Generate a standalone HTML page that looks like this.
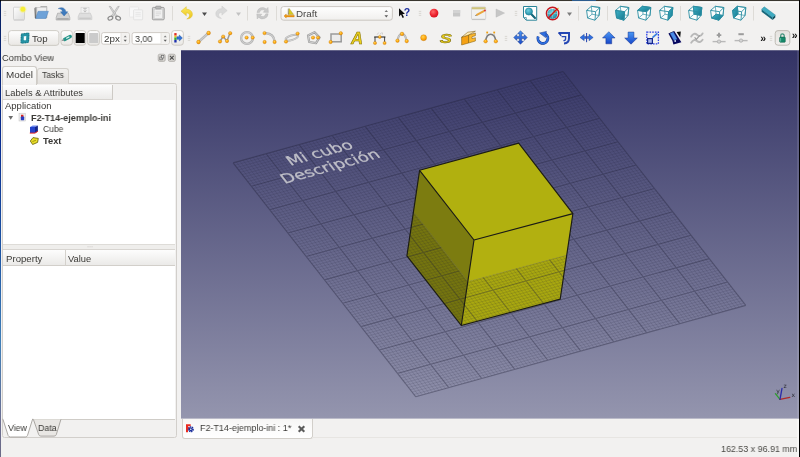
<!DOCTYPE html>
<html lang="es"><head><meta charset="utf-8"><title>FreeCAD</title>
<style>
html,body{margin:0;padding:0}
body{width:800px;height:457px;overflow:hidden;background:#f2f1f0;position:relative;font-family:"Liberation Sans","DejaVu Sans",sans-serif}
.a{position:absolute}
.t{position:absolute;white-space:nowrap;line-height:1;transform-origin:0 0;will-change:transform}
svg{position:absolute;display:block;overflow:visible;will-change:transform}
.v3d{left:181px;top:50px}
.tbs{left:0;top:0}
.topedge{left:0;top:0;width:800px;height:1.2px;background:#39362f}
.hl{left:1px;top:2px;width:798px;height:1.4px;background:#fbfbfa}
.ledge{left:0;top:0;width:1.1px;height:457px;background:linear-gradient(#000 0,#08205f 3px,#0a2d92 30%,#1d55a4 55%,#3f7fb8 75%,#6d6f92 92%,#6b6a86 100%)}
.redge{left:798.7px;top:0;width:1.3px;height:457px;background:#000}
.rhl{left:797px;top:419px;width:2px;height:38px;background:#f8f7f6}
.rhl2{left:797px;top:50.3px;width:1.7px;height:368px;background:rgba(255,255,255,.1)}
.tblue{left:572px;top:0;width:24px;height:1.2px;background:#2c5c8e}
/* dock */
.frame{left:1.5px;top:83px;width:175.4px;height:355px;border:1.4px solid #d2cfcb;border-radius:2.5px;box-sizing:border-box;background:#f2f1f0}
.tab1{left:1.5px;top:65.5px;width:35.5px;height:19.5px;border:1px solid #cfccc7;border-bottom:none;border-radius:3px 3px 0 0;box-sizing:border-box;background:linear-gradient(#fbfbfa,#f2f1f0)}
.tab2{left:37px;top:67.5px;width:31.5px;height:16px;border:1px solid #d3d0cb;border-bottom:none;border-radius:3px 3px 0 0;box-sizing:border-box;background:linear-gradient(#f1f0ee,#e3e1de)}
.hdr{left:2.5px;top:84.5px;width:110px;height:15.5px;background:linear-gradient(#fdfdfd,#ebeae8);border-right:1px solid #cdcac5;border-bottom:1px solid #d6d3cf;box-sizing:border-box}
.hdrr{left:112.5px;top:84.5px;width:62.8px;height:15.5px;background:#f2f1f0}
.tree{left:2.5px;top:100px;width:172.8px;height:144px;background:#fff}
.split{left:2.5px;top:244px;width:172.8px;height:5.5px;background:#efeeec;border-top:1px solid #dedcd8;border-bottom:1px solid #d8d5d1;box-sizing:border-box}
.phdr{left:2.5px;top:249.5px;width:172.8px;height:16.5px;background:linear-gradient(#fdfdfd,#ebeae8);border-bottom:1px solid #d2cfca;box-sizing:border-box}
.pdiv{left:65px;top:250px;width:1px;height:15px;background:#d4d1cc}
.prop{left:2.5px;top:266px;width:172.8px;height:152.5px;background:#fff}
.pline{left:2.5px;top:418.5px;width:172.8px;height:1px;background:#cfccc7}
/* mdi tab */
.mtab{left:181.5px;top:419px;width:131px;height:19.6px;background:linear-gradient(#f7f6f5,#fdfdfd 70%,#fff);border:1px solid #d2cfca;border-top:none;border-radius:0 0 3px 3px;box-sizing:border-box}
.sline{left:312px;top:437.3px;width:487px;height:1px;background:#e7e5e2}
</style></head>
<body>
<svg class="v3d" width="618" height="368.6" viewBox="0 0 618 368.6">
<defs><linearGradient id="bg3" x1="0" y1="0" x2="0" y2="1"><stop offset="0" stop-color="#333365"/><stop offset="1" stop-color="#9495ae"/></linearGradient></defs>
<rect y=".25" width="618" height="368.35" fill="url(#bg3)"/>
<polygon points="232.44,161.77 286.84,231.47 280.3,275.5 225.9,205.8" fill="#75750f"/>
<polygon points="286.84,231.47 385.74,205.07 379.2,249.1 280.3,275.5" fill="#a9a810"/>
<path d="M55.4 111.99L238.1 345.89M53.93 115.24L383.93 23.84M58.7 111.07L241.4 344.97M55.75 117.58L385.75 26.18M62 110.16L244.7 344.06M57.58 119.92L387.58 28.52M65.3 109.24L248 343.14M59.41 122.26L389.41 30.86M68.6 108.33L251.3 342.23M61.23 124.59L391.24 33.19M71.9 107.42L254.6 341.32M63.06 126.93L393.06 35.53M75.2 106.5L257.9 340.4M64.89 129.27L394.89 37.87M78.5 105.59L261.2 339.49M66.72 131.61L396.72 40.21M81.8 104.67L264.5 338.57M68.54 133.95L398.54 42.55M88.4 102.85L271.1 336.75M72.2 138.63L402.2 47.23M91.7 101.93L274.4 335.83M74.02 140.97L404.02 49.57M95 101.02L277.7 334.92M75.85 143.31L405.85 51.91M98.3 100.1L281 334M77.68 145.65L407.68 54.25M101.6 99.19L284.3 333.09M79.5 147.99L409.5 56.59M104.9 98.28L287.6 332.18M81.33 150.32L411.33 58.92M108.2 97.36L290.9 331.26M83.16 152.66L413.16 61.26M111.5 96.45L294.2 330.35M84.99 155L414.99 63.6M114.8 95.53L297.5 329.43M86.81 157.34L416.81 65.94M121.4 93.71L304.1 327.61M90.47 162.02L420.47 70.62M124.7 92.79L307.4 326.69M92.29 164.36L422.29 72.96M128 91.88L310.7 325.78M94.12 166.7L424.12 75.3M131.3 90.96L314 324.86M95.95 169.04L425.95 77.64M134.6 90.05L317.3 323.95M97.77 171.38L427.77 79.97M137.9 89.14L320.6 323.04M99.6 173.71L429.6 82.31M141.2 88.22L323.9 322.12M101.43 176.05L431.43 84.65M144.5 87.31L327.2 321.21M103.26 178.39L433.26 86.99M147.8 86.39L330.5 320.29M105.08 180.73L435.08 89.33M154.4 84.57L337.1 318.47M108.74 185.41L438.74 94.01M157.7 83.65L340.4 317.55M110.56 187.75L440.56 96.35M161 82.74L343.7 316.64M112.39 190.09L442.39 98.69M164.3 81.82L347 315.72M114.22 192.43L444.22 101.03M167.6 80.91L350.3 314.81M116.05 194.76L446.05 103.37M170.9 80L353.6 313.9M117.87 197.1L447.87 105.7M174.2 79.08L356.9 312.98M119.7 199.44L449.7 108.04M177.5 78.17L360.2 312.07M121.53 201.78L451.53 110.38M180.8 77.25L363.5 311.15M123.35 204.12L453.35 112.72M187.4 75.43L370.1 309.33M127.01 208.8L457.01 117.4M190.7 74.51L373.4 308.41M128.83 211.14L458.83 119.74M194 73.6L376.7 307.5M130.66 213.48L460.66 122.08M197.3 72.68L380 306.58M132.49 215.82L462.49 124.42M200.6 71.77L383.3 305.67M134.31 218.15L464.32 126.75M203.9 70.86L386.6 304.76M136.14 220.49L466.14 129.09M207.2 69.94L389.9 303.84M137.97 222.83L467.97 131.43M210.5 69.03L393.2 302.93M139.8 225.17L469.8 133.77M213.8 68.11L396.5 302.01M141.62 227.51L471.62 136.11M220.4 66.29L403.1 300.19M145.28 232.19L475.28 140.79M223.7 65.37L406.4 299.27M147.1 234.53L477.1 143.13M227 64.46L409.7 298.36M148.93 236.87L478.93 145.47M230.3 63.54L413 297.44M150.76 239.21L480.76 147.81M233.6 62.63L416.3 296.53M152.58 241.55L482.59 150.15M236.9 61.72L419.6 295.62M154.41 243.88L484.41 152.48M240.2 60.8L422.9 294.7M156.24 246.22L486.24 154.82M243.5 59.89L426.2 293.79M158.07 248.56L488.07 157.16M246.8 58.97L429.5 292.87M159.89 250.9L489.89 159.5M253.4 57.15L436.1 291.05M163.55 255.58L493.55 164.18M256.7 56.23L439.4 290.13M165.37 257.92L495.37 166.52M260 55.32L442.7 289.22M167.2 260.26L497.2 168.86M263.3 54.4L446 288.3M169.03 262.6L499.03 171.2M266.6 53.49L449.3 287.39M170.86 264.94L500.86 173.53M269.9 52.58L452.6 286.48M172.68 267.27L502.68 175.87M273.2 51.66L455.9 285.56M174.51 269.61L504.51 178.21M276.5 50.75L459.2 284.65M176.34 271.95L506.34 180.55M279.8 49.83L462.5 283.73M178.16 274.29L508.16 182.89M286.4 48.01L469.1 281.91M181.82 278.97L511.82 187.57M289.7 47.09L472.4 280.99M183.64 281.31L513.64 189.91M293 46.18L475.7 280.08M185.47 283.65L515.47 192.25M296.3 45.26L479 279.16M187.3 285.99L517.3 194.59M299.6 44.35L482.3 278.25M189.12 288.33L519.12 196.93M302.9 43.44L485.6 277.34M190.95 290.66L520.95 199.26M306.2 42.52L488.9 276.42M192.78 293L522.78 201.6M309.5 41.61L492.2 275.51M194.61 295.34L524.61 203.94M312.8 40.69L495.5 274.59M196.43 297.68L526.43 206.28M319.4 38.87L502.1 272.77M200.09 302.36L530.09 210.96M322.7 37.95L505.4 271.85M201.91 304.7L531.91 213.3M326 37.04L508.7 270.94M203.74 307.04L533.74 215.64M329.3 36.12L512 270.02M205.57 309.38L535.57 217.98M332.6 35.21L515.3 269.11M207.39 311.72L537.39 220.31M335.9 34.3L518.6 268.2M209.22 314.05L539.22 222.65M339.2 33.38L521.9 267.28M211.05 316.39L541.05 224.99M342.5 32.47L525.2 266.37M212.88 318.73L542.88 227.33M345.8 31.55L528.5 265.45M214.7 321.07L544.7 229.67M352.4 29.73L535.1 263.63M218.36 325.75L548.36 234.35M355.7 28.81L538.4 262.71M220.18 328.09L550.18 236.69M359 27.9L541.7 261.8M222.01 330.43L552.01 239.03M362.3 26.98L545 260.88M223.84 332.77L553.84 241.37M365.6 26.07L548.3 259.97M225.66 335.11L555.66 243.7M368.9 25.16L551.6 259.06M227.49 337.44L557.49 246.04M372.2 24.24L554.9 258.14M229.32 339.78L559.32 248.38M375.5 23.33L558.2 257.23M231.15 342.12L561.15 250.72M378.8 22.41L561.5 256.31M232.97 344.46L562.97 253.06" stroke="#1e1e36" stroke-opacity=".2" stroke-width=".65" fill="none"/>
<path d="M52.1 112.9L234.8 346.8M52.1 112.9L382.1 21.5M85.1 103.76L267.8 337.66M70.37 136.29L400.37 44.89M118.1 94.62L300.8 328.52M88.64 159.68L418.64 68.28M151.1 85.48L333.8 319.38M106.91 183.07L436.91 91.67M184.1 76.34L366.8 310.24M125.18 206.46L455.18 115.06M217.1 67.2L399.8 301.1M143.45 229.85L473.45 138.45M250.1 58.06L432.8 291.96M161.72 253.24L491.72 161.84M283.1 48.92L465.8 282.82M179.99 276.63L509.99 185.23M316.1 39.78L498.8 273.68M198.26 300.02L528.26 208.62M349.1 30.64L531.8 264.54M216.53 323.41L546.53 232.01M382.1 21.5L564.8 255.4M234.8 346.8L564.8 255.4" stroke="#1e1e36" stroke-opacity=".36" stroke-width="1.1" fill="none"/>
<polygon points="238.6,120.3 293,190 286.84,231.47 232.44,161.77" fill="#7c7c10"/>
<polygon points="293,190 391.9,163.6 385.74,205.07 286.84,231.47" fill="#b2b010"/>
<polygon points="238.6,120.3 337.7,93.1 391.9,163.6 293,190" fill="#b1b00f"/>
<path d="M238.6 120.3L337.7 93.1L391.9 163.6L293 190ZM238.6 120.3L225.9 205.8L280.3 275.5L379.2 249.1L391.9 163.6M293 190L280.3 275.5" stroke="#1c1c14" stroke-width="1.15" fill="none" stroke-linejoin="round"/>
<text transform="matrix(3.30 -0.914 1.827 2.339 141.5 106.8)" font-family="'DejaVu Sans','Liberation Sans',sans-serif" font-size="5" text-anchor="middle" fill="#bfbfc8" stroke="#bfbfc8" stroke-width=".1">Mi cubo</text>
<text transform="matrix(3.30 -0.914 1.827 2.339 152.1 120.37)" font-family="'DejaVu Sans','Liberation Sans',sans-serif" font-size="5" text-anchor="middle" fill="#bfbfc8" stroke="#bfbfc8" stroke-width=".1">Descripción</text>
<g stroke-linecap="round" stroke-width="1.3" fill="none"><path d="M599 349.4l-4.6 -5.7" stroke="#2fa02f"/><path d="M599 349.4l9.8 -2" stroke="#b02a2a"/><path d="M599 349.4l2 -11" stroke="#2a2aa8"/></g>
<g font-family="'DejaVu Sans','Liberation Sans',sans-serif" font-size="6" fill="#2a2a33"><text x="610.5" y="347.3">x</text><text x="595.3" y="343.2">y</text><text x="602.4" y="338.2">z</text></g>
</svg>
<div class="a frame"></div><div class="a tab2"></div><div class="a tab1"></div>
<div class="a hdrr"></div><div class="a hdr"></div><div class="a tree"></div><div class="a split"></div>
<div class="a phdr"></div><div class="a pdiv"></div><div class="a prop"></div><div class="a pline"></div>
<div class="a mtab"></div><div class="a sline"></div>
<svg class="tbs" width="800" height="50" viewBox="0 0 800 50">
<defs>
<radialGradient id="og" cx=".4" cy=".35" r=".7"><stop offset="0" stop-color="#ffd257"/><stop offset=".55" stop-color="#ffab10"/><stop offset="1" stop-color="#e78600"/></radialGradient>
<linearGradient id="bt" x1="0" y1="0" x2="0" y2="1"><stop offset="0" stop-color="#fefefe"/><stop offset="1" stop-color="#e9e7e4"/></linearGradient>
<linearGradient id="bt2" x1="0" y1="0" x2="0" y2="1"><stop offset="0" stop-color="#e4e2de"/><stop offset="1" stop-color="#f1f0ee"/></linearGradient>
<linearGradient id="pg" x1="0" y1="0" x2="1" y2="1"><stop offset="0" stop-color="#fdfdfd"/><stop offset="1" stop-color="#dcdcdc"/></linearGradient>
<linearGradient id="tl" x1="0" y1="0" x2="1" y2="1"><stop offset="0" stop-color="#3fb2c8"/><stop offset="1" stop-color="#14788e"/></linearGradient>
<linearGradient id="yg" x1="0" y1="0" x2="0" y2="1"><stop offset="0" stop-color="#fdea5a"/><stop offset="1" stop-color="#e9c220"/></linearGradient>
<linearGradient id="bl" x1="0" y1="0" x2="0" y2="1"><stop offset="0" stop-color="#4a98f5"/><stop offset="1" stop-color="#1746c8"/></linearGradient>
<linearGradient id="cb" x1="0" y1="0" x2="0" y2="1"><stop offset="0" stop-color="#ffffff"/><stop offset="1" stop-color="#f0efed"/></linearGradient>
<radialGradient id="rd" cx=".4" cy=".35" r=".7"><stop offset="0" stop-color="#ff6a6a"/><stop offset=".6" stop-color="#ec2430"/><stop offset="1" stop-color="#d4121f"/></radialGradient>
<radialGradient id="mg" cx=".4" cy=".35" r=".7"><stop offset="0" stop-color="#6fd0e0"/><stop offset="1" stop-color="#1a87a0"/></radialGradient>
</defs>
<path d="M3.8 11.4h2.4M3.8 13.4h2.4M3.8 15.4h2.4" stroke="#d3d0cb" stroke-width=".8"/>
<rect x="13.5" y="7.2" width="11" height="12.6" rx=".9" fill="url(#pg)" stroke="#c6c6c6" stroke-width=".7"/><path d="M13.8 20.2h10.4" stroke="#c9c9c9" stroke-width=".7"/>
<circle cx="22.9" cy="9.3" r="3.6" fill="#faf57a" opacity=".45"/><circle cx="22.9" cy="9.3" r="2.5" fill="#f6ee35"/>
<path d="M35 7.6h4.8l1-1.1h6v11.5h-11.8z" fill="#b4b4b4" stroke="#8f8f8f" stroke-width=".5"/><rect x="37" y="7.4" width="9.4" height="7" fill="#efefef" stroke="#c4c4c4" stroke-width=".4"/>
<polygon points="35.6,18.4 45.9,18.4 48.4,11.3 38.1,11.3" fill="#6ea2d8" stroke="#4d82bd" stroke-width=".5"/><path d="M34.9 8.2l.7 10.2" stroke="#555" stroke-width=".7"/>
<path d="M57.6 13.2L56.2 17.6v2.4h13.6v-2.4L68.4 13.2z" fill="#d3d3d3" stroke="#9b9b9b" stroke-width=".6"/><path d="M57.2 18.9h11.6" stroke="#8c8c8c" stroke-width=".9"/>
<path d="M58.2 8.6c3.6-2.2 7.4-.4 7.6 3.2h2l-3.7 4.2-3.7-4.2h2.1c-.1-1.9-1.9-3.3-4.3-3.2z" fill="#3e7bbe" stroke="#2c5f9e" stroke-width=".4"/>
<rect x="81" y="7.2" width="8" height="6.4" fill="#f1f1f1" stroke="#cdcdcd" stroke-width=".5"/><path d="M85 8.3v3.6m-1.5-1.4l1.5 1.6 1.5-1.6M83.2 8.4h3.6" stroke="#b9b9b9" stroke-width=".8" fill="none"/>
<path d="M79.6 13.2L78.2 16.8v2.8h13.6v-2.8L90.4 13.2z" fill="#dedede" stroke="#c2c2c2" stroke-width=".6"/><path d="M79.2 18.2h11.6" stroke="#bdbdbd" stroke-width=".9"/>
<g stroke="#9a9a9a" stroke-width=".5" fill="#dadada"><polygon points="109.2,6.3 110.9,6.6 117.4,16.4 115.9,17.2"/><polygon points="119.3,6.3 117.6,6.6 111.1,16.4 112.6,17.2"/></g>
<g stroke="#8a8a8a" stroke-width="1.15" fill="none"><ellipse cx="110.4" cy="18.1" rx="2.5" ry="1.8" transform="rotate(-25 110.4 18.1)"/><ellipse cx="118.1" cy="18.1" rx="2.5" ry="1.8" transform="rotate(25 118.1 18.1)"/></g>
<rect x="129.5" y="7" width="9" height="10" rx=".6" fill="#f8f8f8" stroke="#e1e1e1" stroke-width=".6"/><rect x="133.6" y="9.8" width="9" height="10" rx=".6" fill="#f5f5f5" stroke="#d9d9d9" stroke-width=".6"/><path d="M135.4 12.6h5.4M135.4 14.4h5.4M135.4 16.2h5.4" stroke="#e3e3e3" stroke-width=".7"/>
<rect x="152.4" y="7.4" width="11.8" height="12.4" rx="1" fill="#d6d6d6" stroke="#8e8e8e" stroke-width=".8"/><rect x="154.1" y="9.4" width="8.4" height="9" fill="#f0f0f0" stroke="#bdbdbd" stroke-width=".4"/>
<rect x="155.6" y="6.1" width="5.4" height="2.8" rx=".8" fill="#b9b9b9" stroke="#878787" stroke-width=".5"/><path d="M155.6 12h5.4M155.6 13.8h5.4M155.6 15.6h3.6" stroke="#d0d0d0" stroke-width=".7"/>
<path d="M172.5 6V20.5" stroke="#dddbd7" stroke-width="1"/>
<path d="M181 11.2L186.3 6.7V9.3C190.6 9.3 192.4 12 192.4 14.3C192.4 17 190.1 19 186.8 19C189 17.9 189.7 16.4 189.5 15C189.3 13.6 188.1 13.1 186.3 13.1V15.7Z" fill="url(#yg)" stroke="#dcb920" stroke-width=".45" stroke-linejoin="round"/>
<polygon points="202,12.6 207,12.6 204.5,16.0" fill="#4b4b4b"/>
<path d="M181 11.2L186.3 6.7V9.3C190.6 9.3 192.4 12 192.4 14.3C192.4 17 190.1 19 186.8 19C189 17.9 189.7 16.4 189.5 15C189.3 13.6 188.1 13.1 186.3 13.1V15.7Z" transform="translate(408.2 -.6) scale(-1 1)" fill="#d9d9d9" stroke="#cacaca" stroke-width=".45" stroke-linejoin="round"/>
<polygon points="236,12.6 241,12.6 238.5,16.0" fill="#c2c2c2"/>
<path d="M247.5 6V20.5" stroke="#dddbd7" stroke-width="1"/>
<g fill="#c9c9c9" stroke="#b4b4b4" stroke-width=".4"><path d="M257 12.6A5.6 5.6 0 0 1 266.4 9L268 7.4L268.4 12.5L263.3 12.2L264.8 10.6A3.3 3.3 0 0 0 259.4 12.6Z"/><path d="M257 12.6A5.6 5.6 0 0 1 266.4 9L268 7.4L268.4 12.5L263.3 12.2L264.8 10.6A3.3 3.3 0 0 0 259.4 12.6Z" transform="rotate(180 262.6 13.2)"/></g>
<path d="M276.5 6V20.5" stroke="#dddbd7" stroke-width="1"/>
<rect x="281" y="6.6" width="111.4" height="13.6" rx="2.6" fill="url(#cb)" stroke="#c6c2bc" stroke-width=".9"/>
<polygon points="384.6,11.9 388,11.9 386.3,9.9" fill="#777"/><polygon points="384.5,15.2 388.1,15.2 386.3,17.4" fill="#5a5a5a"/>
<polygon points="289.2,8.4 293.6,14.4 288.6,14.4" fill="#d9cb22" stroke="#8a7d10" stroke-width=".3"/><path d="M288.3 8.6v6" stroke="#6a5a20" stroke-width=".6"/>
<path d="M284 16l2.2-2v1.2h8v1.7h-8v1.2z" fill="#f39c14" stroke="#b96a00" stroke-width=".35"/>
<polygon points="399,8.2 399,16.4 401,14.5 402.6,17.9 404,17.2 402.4,13.9 405,13.9" fill="#0c0c0c"/>
<text x="403.8" y="16.2" font-family="'Liberation Sans',sans-serif" font-weight="bold" font-size="10.5" fill="#1b2d9e">?</text>
<path d="M418.8 11.4h2.4M418.8 13.4h2.4M418.8 15.4h2.4" stroke="#d3d0cb" stroke-width=".8"/>
<circle cx="434" cy="13.1" r="4.4" fill="url(#rd)"/>
<rect x="453" y="10" width="7.2" height="6.6" rx=".5" fill="#c7c7c7"/><rect x="453" y="10" width="7.2" height="3" rx=".5" fill="#d3d3d3"/>
<rect x="471.5" y="7" width="14.2" height="12.2" rx="1" fill="#f1f1f0" stroke="#c3c3c3" stroke-width=".6"/><rect x="471.8" y="7.2" width="13.6" height="2.1" fill="#cfc47c"/><path d="M471.8 19.6h13.6" stroke="#bcbcbc" stroke-width=".8"/>
<path d="M476.4 15.2L484.2 10.8" stroke="#e9a63c" stroke-width="1.9"/><path d="M475.2 15.9l1.4-.1-.6-1.1z" fill="#333"/><circle cx="484.9" cy="10.4" r="1" fill="#e23434"/>
<polygon points="496,9 496,17.2 504.6,13.1" fill="#c6c6c6" stroke="#b5b5b5" stroke-width=".4"/>
<path d="M514.8 11.4h2.4M514.8 13.4h2.4M514.8 15.4h2.4" stroke="#d3d0cb" stroke-width=".8"/>
<path d="M523.5 6.5h13.2v13.7h-10.4l-2.8-2.8z" fill="#fff" stroke="#2a8498" stroke-width="1"/><path d="M523.6 17.5h2.7v2.6" fill="none" stroke="#2a8498" stroke-width=".7"/>
<path d="M531.4 14.2L535 18" stroke="#13667a" stroke-width="2.1" stroke-linecap="round"/><circle cx="528.9" cy="11.5" r="3.6" fill="url(#mg)" stroke="#15788e" stroke-width=".6"/>
<circle cx="552.4" cy="13.9" r="5" fill="url(#mg)"/><path d="M547.6 13.4h9.6M552.4 9v9.6" stroke="#d9f2f6" stroke-width=".5" opacity=".7"/>
<path d="M552.2 14.2L558.6 8" stroke="#ecd04a" stroke-width="1.2"/>
<circle cx="552.6" cy="13.5" r="6.2" fill="none" stroke="#c5161d" stroke-width="1.4"/><path d="M548.3 17.9L557 9.1" stroke="#c5161d" stroke-width="1.4"/>
<polygon points="567,12.6 572,12.6 569.5,16.0" fill="#7d7d7d"/>
<path d="M578.5 6V20.5" stroke="#dddbd7" stroke-width="1"/>
<g stroke="#2b8da1" stroke-width=".9" stroke-linejoin="round"><polygon points="586.6,10.4 591.4,6.3 599.8,7.5 599.0,15.5 595.0,20.2 587.6,18.0" fill="#fbfdfd" stroke="none"/><polygon points="591.4,6.3 599.8,7.5 599.0,15.5 592.0,14.2" fill="none" stroke-opacity=".75"/><path d="M587.6 18.0 L592.0 14.2" stroke-opacity=".75" fill="none"/><polygon points="586.6,10.4 595.6,11.7 595.0,20.2 587.6,18.0" fill="none"/><path d="M586.6 10.4 L591.4 6.3" fill="none"/><path d="M595.6 11.7 L599.8 7.5" fill="none"/><path d="M595.0 20.2 L599.0 15.5" fill="none"/><path d="M591.4 6.3 L599.8 7.5 L599.0 15.5" fill="none"/></g>
<path d="M607.5 6V20.5" stroke="#dddbd7" stroke-width="1"/>
<g stroke="#2b8da1" stroke-width=".9" stroke-linejoin="round"><polygon points="615.6,10.4 620.4,6.3 628.8,7.5 628.0,15.5 624.0,20.2 616.6,18.0" fill="#fbfdfd" stroke="none"/><polygon points="620.4,6.3 628.8,7.5 628.0,15.5 621.0,14.2" fill="none" stroke-opacity=".75"/><path d="M616.6 18.0 L621.0 14.2" stroke-opacity=".75" fill="none"/><polygon points="615.6,10.4 624.6,11.7 624.0,20.2 616.6,18.0" fill="url(#tl)"/><polygon points="615.6,10.4 624.6,11.7 624.0,20.2 616.6,18.0" fill="none"/><path d="M615.6 10.4 L620.4 6.3" fill="none"/><path d="M624.6 11.7 L628.8 7.5" fill="none"/><path d="M624.0 20.2 L628.0 15.5" fill="none"/><path d="M620.4 6.3 L628.8 7.5 L628.0 15.5" fill="none"/></g>
<g stroke="#2b8da1" stroke-width=".9" stroke-linejoin="round"><polygon points="637.6,10.4 642.4,6.3 650.8,7.5 650.0,15.5 646.0,20.2 638.6,18.0" fill="#fbfdfd" stroke="none"/><polygon points="642.4,6.3 650.8,7.5 650.0,15.5 643.0,14.2" fill="none" stroke-opacity=".75"/><path d="M638.6 18.0 L643.0 14.2" stroke-opacity=".75" fill="none"/><polygon points="637.6,10.4 646.6,11.7 650.8,7.5 642.4,6.3" fill="url(#tl)"/><polygon points="637.6,10.4 646.6,11.7 646.0,20.2 638.6,18.0" fill="none"/><path d="M637.6 10.4 L642.4 6.3" fill="none"/><path d="M646.6 11.7 L650.8 7.5" fill="none"/><path d="M646.0 20.2 L650.0 15.5" fill="none"/><path d="M642.4 6.3 L650.8 7.5 L650.0 15.5" fill="none"/></g>
<g stroke="#2b8da1" stroke-width=".9" stroke-linejoin="round"><polygon points="659.6,10.4 664.4,6.3 672.8,7.5 672.0,15.5 668.0,20.2 660.6,18.0" fill="#fbfdfd" stroke="none"/><polygon points="664.4,6.3 672.8,7.5 672.0,15.5 665.0,14.2" fill="none" stroke-opacity=".75"/><path d="M660.6 18.0 L665.0 14.2" stroke-opacity=".75" fill="none"/><polygon points="668.6,11.7 672.8,7.5 672.0,15.5 668.0,20.2" fill="url(#tl)"/><polygon points="659.6,10.4 668.6,11.7 668.0,20.2 660.6,18.0" fill="none"/><path d="M659.6 10.4 L664.4 6.3" fill="none"/><path d="M668.6 11.7 L672.8 7.5" fill="none"/><path d="M668.0 20.2 L672.0 15.5" fill="none"/><path d="M664.4 6.3 L672.8 7.5 L672.0 15.5" fill="none"/></g>
<path d="M680.5 6V20.5" stroke="#dddbd7" stroke-width="1"/>
<g stroke="#2b8da1" stroke-width=".9" stroke-linejoin="round"><polygon points="688.6,10.4 693.4,6.3 701.8,7.5 701.0,15.5 697.0,20.2 689.6,18.0" fill="#fbfdfd" stroke="none"/><polygon points="693.4,6.3 701.8,7.5 701.0,15.5 694.0,14.2" fill="none" stroke-opacity=".75"/><path d="M689.6 18.0 L694.0 14.2" stroke-opacity=".75" fill="none"/><polygon points="693.4,6.3 701.8,7.5 701.0,15.5 694.0,14.2" fill="url(#tl)"/><polygon points="688.6,10.4 697.6,11.7 697.0,20.2 689.6,18.0" fill="none"/><path d="M688.6 10.4 L693.4 6.3" fill="none"/><path d="M697.6 11.7 L701.8 7.5" fill="none"/><path d="M697.0 20.2 L701.0 15.5" fill="none"/><path d="M693.4 6.3 L701.8 7.5 L701.0 15.5" fill="none"/></g>
<g stroke="#2b8da1" stroke-width=".9" stroke-linejoin="round"><polygon points="710.6,10.4 715.4,6.3 723.8,7.5 723.0,15.5 719.0,20.2 711.6,18.0" fill="#fbfdfd" stroke="none"/><polygon points="715.4,6.3 723.8,7.5 723.0,15.5 716.0,14.2" fill="none" stroke-opacity=".75"/><path d="M711.6 18.0 L716.0 14.2" stroke-opacity=".75" fill="none"/><polygon points="711.6,18.0 719.0,20.2 723.0,15.5 716.0,14.2" fill="url(#tl)"/><polygon points="710.6,10.4 719.6,11.7 719.0,20.2 711.6,18.0" fill="none"/><path d="M710.6 10.4 L715.4 6.3" fill="none"/><path d="M719.6 11.7 L723.8 7.5" fill="none"/><path d="M719.0 20.2 L723.0 15.5" fill="none"/><path d="M715.4 6.3 L723.8 7.5 L723.0 15.5" fill="none"/></g>
<g stroke="#2b8da1" stroke-width=".9" stroke-linejoin="round"><polygon points="732.6,10.4 737.4,6.3 745.8,7.5 745.0,15.5 741.0,20.2 733.6,18.0" fill="#fbfdfd" stroke="none"/><polygon points="737.4,6.3 745.8,7.5 745.0,15.5 738.0,14.2" fill="none" stroke-opacity=".75"/><path d="M733.6 18.0 L738.0 14.2" stroke-opacity=".75" fill="none"/><polygon points="732.6,10.4 737.4,6.3 738.0,14.2 733.6,18.0" fill="url(#tl)"/><polygon points="732.6,10.4 741.6,11.7 741.0,20.2 733.6,18.0" fill="none"/><path d="M732.6 10.4 L737.4 6.3" fill="none"/><path d="M741.6 11.7 L745.8 7.5" fill="none"/><path d="M741.0 20.2 L745.0 15.5" fill="none"/><path d="M737.4 6.3 L745.8 7.5 L745.0 15.5" fill="none"/></g>
<path d="M753.5 6V20.5" stroke="#dddbd7" stroke-width="1"/>
<polygon points="761.6,9.2 772.6,17.4 772.6,20 761.6,11.8" fill="#17687b"/><polygon points="772.6,17.4 775.3,15 775.3,17.6 772.6,20" fill="#124f5f"/><polygon points="764.3,6.8 775.3,15 772.6,17.4 761.6,9.2" fill="#3fabc1" stroke="#1d7f94" stroke-width=".4"/>
<path d="M3.8 36.4h2.4M3.8 38.4h2.4M3.8 40.4h2.4" stroke="#d3d0cb" stroke-width=".8"/>
<rect x="8.5" y="30.6" width="50.4" height="14.8" rx="2.8" fill="url(#bt)" stroke="#cbc7c1" stroke-width=".9"/>
<polygon points="22.4,35 27.9,34.2 27.5,41.4 22.1,42" fill="#f4fbfc" stroke="#2593a4" stroke-width="3" stroke-linejoin="round"/><polygon points="21.3,33.8 29,32.9 28.6,42.5 21,43.2" fill="none" stroke="#10505c" stroke-width=".55" stroke-dasharray="1.1 1.4"/>
<rect x="61" y="30.6" width="11.4" height="14.6" rx="2.8" fill="url(#bt)" stroke="#cbc7c1" stroke-width=".9"/>
<path d="M64.6 39.5L70.2 36.5" stroke="#229488" stroke-width="3.5" stroke-linecap="round"/><path d="M66.6 38.2L69 36.9" stroke="#e6f7f4" stroke-width="1.1" stroke-linecap="round"/><path d="M62.4 40.4l1.3-.5" stroke="#9a9a9a" stroke-width="1.4" stroke-linecap="round"/>
<rect x="74" y="30.6" width="11.8" height="14.6" rx="2.8" fill="url(#bt)" stroke="#cbc7c1" stroke-width=".9"/>
<rect x="75.7" y="33" width="9" height="10" fill="#000"/>
<rect x="87.6" y="30.6" width="11.8" height="14.6" rx="2.8" fill="url(#bt)" stroke="#cbc7c1" stroke-width=".9"/>
<rect x="89.2" y="33" width="9" height="10" fill="#cbcbcb"/>
<rect x="101.6" y="32.6" width="27.8" height="11.6" rx="2" fill="#fff" stroke="#c9c5bf" stroke-width=".9"/><path d="M121 33.1h6.400000000000006a1.6 1.6 0 0 1 1.6 1.6v7.4a1.6 1.6 0 0 1 -1.6 1.6h-6.400000000000006z" fill="#f3f2f0"/><path d="M121 33.1v10.6" stroke="#dedbd7" stroke-width=".7"/><polygon points="123.7,37.2 126.7,37.2 125.2,35.4" fill="#7c7c7c"/><polygon points="123.60000000000001,39.8 126.8,39.8 125.2,41.8" fill="#5e5e5e"/>
<rect x="132.1" y="32.6" width="37.3" height="11.6" rx="2" fill="#fff" stroke="#c9c5bf" stroke-width=".9"/><path d="M161 33.1h6.399999999999977a1.6 1.6 0 0 1 1.6 1.6v7.4a1.6 1.6 0 0 1 -1.6 1.6h-6.399999999999977z" fill="#f3f2f0"/><path d="M161 33.1v10.6" stroke="#dedbd7" stroke-width=".7"/><polygon points="163.70000000000002,37.2 166.70000000000002,37.2 165.20000000000002,35.4" fill="#7c7c7c"/><polygon points="163.60000000000002,39.8 166.8,39.8 165.20000000000002,41.8" fill="#5e5e5e"/>
<rect x="171.6" y="30.6" width="11.8" height="14.6" rx="2.8" fill="url(#bt)" stroke="#cbc7c1" stroke-width=".9"/>
<rect x="174.3" y="33.1" width="2.3" height="2.5" fill="#e02a22"/><rect x="174.3" y="35.6" width="2.3" height="1.9" fill="#f0c419"/><rect x="174.3" y="37.5" width="2.3" height="2.5" fill="#2fae3a"/><rect x="174.3" y="40" width="2.3" height="2.5" fill="#1c2fae"/>
<polygon points="176.9,36.7 179.3,36.7 179.3,35 182.4,38 179.3,41 179.3,39.3 176.9,39.3" fill="#2f74d6" stroke="#1a3f92" stroke-width=".4"/>
<path d="M187.8 36.4h2.4M187.8 38.4h2.4M187.8 40.4h2.4" stroke="#d3d0cb" stroke-width=".8"/>
<path d="M198.5 42L208.5 33" stroke="#b0b0b0" stroke-width="2.4" stroke-linecap="round"/><path d="M198.5 42L208.5 33" stroke="#cdcdcd" stroke-width="1.2" stroke-linecap="round"/><circle cx="198.5" cy="42" r="1.9" fill="url(#og)" stroke="#c27a08" stroke-width=".35"/><circle cx="208.6" cy="33" r="1.9" fill="url(#og)" stroke="#c27a08" stroke-width=".35"/>
<path d="M220 41.5L223 36.5L227 41L230 33" stroke="#9a9a9a" stroke-width="1.5" fill="none"/><circle cx="220" cy="41.5" r="1.7" fill="url(#og)" stroke="#c27a08" stroke-width=".35"/><circle cx="223.2" cy="36.6" r="1.7" fill="url(#og)" stroke="#c27a08" stroke-width=".35"/><circle cx="227" cy="41" r="1.7" fill="url(#og)" stroke="#c27a08" stroke-width=".35"/><circle cx="230.2" cy="33.2" r="1.7" fill="url(#og)" stroke="#c27a08" stroke-width=".35"/>
<circle cx="247" cy="38" r="5.9" fill="none" stroke="#b0b0b0" stroke-width="2.3"/><circle cx="247" cy="38" r="5.9" fill="none" stroke="#cecece" stroke-width="1.1"/><circle cx="246.6" cy="37.6" r="1.7" fill="url(#og)" stroke="#c27a08" stroke-width=".35"/><circle cx="252.7" cy="37.6" r="1.7" fill="url(#og)" stroke="#c27a08" stroke-width=".35"/>
<path d="M265.6 33.2Q273.8 33.8 274.6 41.2" stroke="#b0b0b0" stroke-width="2.3" fill="none"/><path d="M265.6 33.2Q273.8 33.8 274.6 41.2" stroke="#cecece" stroke-width="1.1" fill="none"/><circle cx="264.5" cy="33.1" r="1.7" fill="url(#og)" stroke="#c27a08" stroke-width=".35"/><circle cx="264.6" cy="42" r="1.7" fill="url(#og)" stroke="#c27a08" stroke-width=".35"/><circle cx="274.6" cy="42" r="1.7" fill="url(#og)" stroke="#c27a08" stroke-width=".35"/>
<g transform="rotate(-17 291.8 37.7)"><ellipse cx="291.8" cy="37.7" rx="6.4" ry="2.3" fill="none" stroke="#b0b0b0" stroke-width="1.9"/><ellipse cx="291.8" cy="37.7" rx="6.4" ry="2.3" fill="none" stroke="#d2d2d2" stroke-width="1"/></g><circle cx="286" cy="41.6" r="1.7" fill="url(#og)" stroke="#c27a08" stroke-width=".35"/><circle cx="297.6" cy="33.6" r="1.7" fill="url(#og)" stroke="#c27a08" stroke-width=".35"/>
<polygon points="308,35.4 314.6,32.2 319.6,37.4 316,43.2 309.2,42" fill="none" stroke="#9c9c9c" stroke-width="2.2" stroke-linejoin="round"/><polygon points="308,35.4 314.6,32.2 319.6,37.4 316,43.2 309.2,42" fill="none" stroke="#cfcfcf" stroke-width="1"/><circle cx="313" cy="37.6" r="1.7" fill="url(#og)" stroke="#c27a08" stroke-width=".35"/><circle cx="318" cy="37.6" r="1.7" fill="url(#og)" stroke="#c27a08" stroke-width=".35"/>
<rect x="331" y="34" width="10.2" height="7.8" fill="#ececec" stroke="#9a9a9a" stroke-width="1.5"/><circle cx="330.6" cy="42" r="1.7" fill="url(#og)" stroke="#c27a08" stroke-width=".35"/><circle cx="340.8" cy="33.3" r="1.7" fill="url(#og)" stroke="#c27a08" stroke-width=".35"/>
<text x="350.9" y="43.7" font-family="'Liberation Sans',sans-serif" font-weight="bold" font-style="italic" font-size="16.5" fill="#ecd21c" stroke="#86720a" stroke-width=".55">A</text>
<path d="M375 37v6M384.6 37v6" stroke="#333" stroke-width=".9"/><path d="M374.2 37h11.2" stroke="#2a2a2a" stroke-width="1.1"/><path d="M377.2 34.6l1.4-2M380 34.6l1.4-2M382.4 34.6v-2" stroke="#bdbdbd" stroke-width=".7"/><circle cx="375" cy="43" r="1.6" fill="url(#og)" stroke="#c27a08" stroke-width=".35"/><circle cx="384.6" cy="43" r="1.6" fill="url(#og)" stroke="#c27a08" stroke-width=".35"/><circle cx="379.8" cy="36.9" r="1.5" fill="url(#og)" stroke="#c27a08" stroke-width=".35"/>
<path d="M397.6 40.6Q398.4 34 402 34Q405.6 34 406.6 41" stroke="#b0b0b0" stroke-width="2.2" fill="none"/><path d="M397.6 40.6Q398.4 34 402 34Q405.6 34 406.6 41" stroke="#cecece" stroke-width="1" fill="none"/><circle cx="397.5" cy="40.7" r="1.8" fill="url(#og)" stroke="#c27a08" stroke-width=".35"/><circle cx="402" cy="33.9" r="1.8" fill="url(#og)" stroke="#c27a08" stroke-width=".35"/><circle cx="406.7" cy="41.1" r="1.8" fill="url(#og)" stroke="#c27a08" stroke-width=".35"/>
<circle cx="423.6" cy="37.7" r="3.0" fill="url(#og)" stroke="#c27a08" stroke-width=".35"/>
<text x="439.8" y="43.1" font-family="'Liberation Sans',sans-serif" font-style="italic" font-weight="bold" font-size="13.5" fill="#e4ca18" stroke="#6e5e08" stroke-width=".45" textLength="12" lengthAdjust="spacingAndGlyphs">S</text>
<g stroke="#7a5200" stroke-width=".5" stroke-linejoin="round"><polygon points="461.6,37.2 468.6,35 468.6,43 461.6,45" fill="#f5a114"/><polygon points="461.6,37.2 467.8,32.2 475.4,31.2 468.6,35" fill="#ffedb8"/><polygon points="468.6,35 475.4,33 475.4,35.7 472,36.7 472,38.7 475.4,37.7 475.4,41 468.6,43" fill="#fbb72e"/></g>
<path d="M485.6 41.2L487.2 32.6M495.8 41.2L494.2 32.6" stroke="#9a9a9a" stroke-width=".6" stroke-dasharray="1 1"/><path d="M485.6 41C487 32 494.4 32 495.8 41" stroke="#7d7d7d" stroke-width="1.5" fill="none"/><rect x="486.3" y="31.6" width="1.8" height="1.8" fill="#f0a010"/><rect x="493.3" y="31.6" width="1.8" height="1.8" fill="#f0a010"/><circle cx="485.6" cy="41.3" r="1.8" fill="url(#og)" stroke="#c27a08" stroke-width=".35"/><circle cx="495.8" cy="41.3" r="1.8" fill="url(#og)" stroke="#c27a08" stroke-width=".35"/>
<path d="M504.8 36.4h2.4M504.8 38.4h2.4M504.8 40.4h2.4" stroke="#d3d0cb" stroke-width=".8"/>
<path d="M520.5 30.8l2.9 2.9h-1.8v2.7h2.7v-1.8l2.9 2.9-2.9 2.9v-1.8h-2.7v2.7h1.8l-2.9 2.9-2.9-2.9h1.8v-2.7h-2.7v1.8l-2.9-2.9 2.9-2.9v1.8h2.7v-2.7h-1.8z" fill="url(#bl)" stroke="#17388c" stroke-width=".5" stroke-linejoin="round"/>
<path d="M545.6 34.2A5 5 0 1 1 538.2 36.6" fill="none" stroke="#17388c" stroke-width="2.8"/><path d="M545.6 34.2A5 5 0 1 1 538.2 36.6" fill="none" stroke="#2f6fe0" stroke-width="1.9"/><polygon points="539.6,33 546.4,31.4 545.6,37.6" fill="#2f6fe0" stroke="#17388c" stroke-width=".5"/>
<path d="M558.6 33H569V38Q569 43.4 564 43.4" fill="none" stroke="#2447b4" stroke-width="2"/><path d="M561.6 36.6H565.6V38.4Q565.6 40.6 563.4 40.6" fill="none" stroke="#2447b4" stroke-width="1.35"/><path d="M558.6 32.6l2.6 3.2" stroke="#1f3fae" stroke-width="1.4"/>
<g fill="#2f6fe0" stroke="#17388c" stroke-width=".4"><polygon points="580,37.5 584.2,34.3 584.2,36.5 586,36.5 586,38.5 584.2,38.5 584.2,40.7"/><polygon points="593.2,37.5 589,34.3 589,36.5 587.2,36.5 587.2,38.5 589,38.5 589,40.7"/></g><path d="M586.6 33v9.2" stroke="#1f3fae" stroke-width="1"/>
<polygon points="608.8,31.7 615.1,38 611.7,38 611.7,43.8 605.9,43.8 605.9,38 602.5,38" fill="url(#bl)" stroke="#15318c" stroke-width=".5" stroke-linejoin="round"/>
<polygon points="628.1,32.1 633.9,32.1 633.9,38 637.3,38 631,44.2 624.7,38 628.1,38" fill="url(#bl)" stroke="#15318c" stroke-width=".5" stroke-linejoin="round"/>
<rect x="646.8" y="32.2" width="11.6" height="11.6" fill="none" stroke="#2a3fe6" stroke-width="1.3" stroke-dasharray="1.6 1.1"/><rect x="647.6" y="38.6" width="4.8" height="4.8" fill="#aab8ee" stroke="#14268c" stroke-width="1.2"/><path d="M653 37.2l3.8-3.4" stroke="#3b7fe0" stroke-width="1.8" stroke-linecap="round"/>
<polygon points="668.4,33.4 674.2,31 681.4,42.2 673.4,44.6 672.4,40.8" fill="#080860"/><polygon points="676.6,32 680.8,31.4 680.2,37.6" fill="#0a0a0a"/><polygon points="669.8,33.2 673.4,31.8 677.4,39.2 673.8,40.6" fill="#4a8ae8" stroke="#123" stroke-width=".3"/><circle cx="675.2" cy="41" r=".9" fill="#dfe6ff"/>
<g fill="none" stroke="#b9b9b9" stroke-width="1.9" stroke-linecap="round"><path d="M691.2 36.6Q694 32 697 34.8T702.6 33.4"/><path d="M691.2 42.8Q694 38.4 697 41T702.6 39.8"/></g><path d="M694.6 37.4l1.8 2 3.4-4" fill="none" stroke="#9c9c9c" stroke-width="1.2"/>
<path d="M719 32.8v4.6M716.7 35.1h4.6" stroke="#9c9c9c" stroke-width="1.9"/><path d="M712.6 41.6h13" stroke="#b9b9b9" stroke-width="1.4"/><circle cx="719" cy="41.6" r="1.7" fill="#d6d6d6" stroke="#9c9c9c" stroke-width=".6"/>
<path d="M738.4 34.2h5.4" stroke="#9c9c9c" stroke-width="2"/><path d="M734.6 40.6h13" stroke="#b9b9b9" stroke-width="1.4"/><circle cx="741" cy="40.6" r="1.7" fill="#d6d6d6" stroke="#9c9c9c" stroke-width=".6"/>
<text x="760.2" y="41.6" font-family="'Liberation Sans',sans-serif" font-weight="bold" font-size="10.5" fill="#111">»</text>
<path d="M769.8 36.4h2.4M769.8 38.4h2.4M769.8 40.4h2.4" stroke="#d3d0cb" stroke-width=".8"/>
<rect x="775.2" y="30.6" width="14.6" height="14.6" rx="2.8" fill="url(#bt2)" stroke="#b9b5ae" stroke-width=".9"/>
<path d="M780.7 37.4v-1.7a1.75 1.75 0 0 1 3.5 0v1.7" fill="none" stroke="#3f917b" stroke-width="1.2"/><rect x="779.6" y="37.1" width="5.7" height="5.2" rx=".8" fill="#16896a" stroke="#0d5a45" stroke-width=".5"/><path d="M780.6 38v3.6" stroke="#6fc4ab" stroke-width=".8"/>
<text x="791.8" y="38.5" font-family="'Liberation Sans',sans-serif" font-weight="bold" font-size="10.5" fill="#111">»</text>
</svg>
<svg class="tbs" width="800" height="457" viewBox="0 0 800 457" style="pointer-events:none">
<rect x="158.2" y="54.2" width="7" height="7.2" rx="1.5" fill="#d5d3cf" stroke="#a8a5a0" stroke-width=".7"/><rect x="159.8" y="57" width="2.6" height="2.8" fill="none" stroke="#6e6e6e" stroke-width=".7"/><rect x="161.4" y="55.6" width="2.4" height="2.4" fill="#e8e8e8" stroke="#6e6e6e" stroke-width=".7"/>
<rect x="168.3" y="54.2" width="7" height="7.2" rx="1.5" fill="#d5d3cf" stroke="#a8a5a0" stroke-width=".7"/><path d="M169.9 55.9l3.8 3.8M173.7 55.9l-3.8 3.8" stroke="#4e4e4e" stroke-width="1.1"/>
<polygon points="8.4,116 13.1,116 10.75,119.7" fill="#6c6c6c"/>
<rect x="19" y="113.2" width="6.3" height="7.8" fill="#ececec" stroke="#c2c2c2" stroke-width=".5"/><rect x="21" y="114.8" width="2.4" height="2.6" fill="#de2420"/><rect x="20.8" y="116.6" width="3.4" height="3.6" rx=".6" fill="#2a3cc0"/>
<polygon points="30,127 35,127 35,133 30,133" fill="#2544cc"/><polygon points="30,127 32.6,125.5 37.9,125.5 35,127" fill="#6a86ee"/><polygon points="35,127 37.9,125.5 37.9,131.3 35,133" fill="#14268c"/><path d="M29.8 133.1h5.2l2.9-1.8" fill="none" stroke="#e32222" stroke-width="1"/>
<polygon points="30.3,141 33,137.6 38.3,138.4 37.6,142.4 32.6,144.5" fill="#e9de2a" stroke="#5c5400" stroke-width=".75" stroke-linejoin="round"/><path d="M32.4 141.6l3.6-1.4" stroke="#8a7d00" stroke-width=".7"/>
<path d="M87.6 246.8h.9M89.6 246.8h.9M91.6 246.8h.9" stroke="#c6c3be" stroke-width=".9"/>
<path d="M33.4 419.4L38.7 434.6Q39.3 436.1 40.9 436.1H54.1Q55.7 436.1 56.3 434.6L60.9 419.4" fill="#e9e7e4" stroke="#9d9a95" stroke-width=".85"/>
<path d="M2.8 418.8L8.1 435.4Q8.7 437 10.3 437H25.3Q26.9 437 27.5 435.4L32.7 418.8" fill="#fff" stroke="#9d9a95" stroke-width=".85"/><path d="M3.6 418.9h28.4" stroke="#fff" stroke-width="1.4"/>
<path d="M186 424.3h4.7v1.9h-2.7v1.3h2v1.8h-2v2.9h-2z" fill="#ea2a1e"/><circle cx="190.8" cy="429.3" r="2.3" fill="none" stroke="#1b2e9c" stroke-width="1.5" stroke-dasharray="1.2 .6"/><circle cx="190.8" cy="429.3" r="1.9" fill="#1b2e9c"/><circle cx="190.8" cy="429.3" r=".8" fill="#fff"/>
<path d="M298.7 426.2l5.6 5.6M304.3 426.2l-5.6 5.6" stroke="#5c5c5c" stroke-width="2.1"/>
</svg>
<span class="t" id="t_cv" style="left:2.00px;top:54.43px;font-size:9.3px;color:#3a3936;transform:scaleX(0.9904);">Combo View</span>
<span class="t" id="t_mo" style="left:5.75px;top:71.43px;font-size:9.3px;color:#3a3936;transform:scaleX(1.0625);">Model</span>
<span class="t" id="t_ta" style="left:42.25px;top:71.43px;font-size:9.3px;color:#3a3936;transform:scaleX(0.9247);">Tasks</span>
<span class="t" id="t_la" style="left:5.25px;top:89.43px;font-size:9.3px;color:#3a3936;transform:scaleX(1.0065);">Labels &amp; Attributes</span>
<span class="t" id="t_ap" style="left:5.00px;top:102.23px;font-size:9.3px;color:#3a3936;transform:scaleX(1.0222);">Application</span>
<span class="t" id="t_f2" style="left:30.50px;top:113.83px;font-size:9.3px;color:#3a3936;font-weight:bold;transform:scaleX(0.9753);">F2-T14-ejemplo-ini</span>
<span class="t" id="t_cu" style="left:43.00px;top:125.43px;font-size:9.3px;color:#3a3936;transform:scaleX(0.9176);">Cube</span>
<span class="t" id="t_tx" style="left:42.70px;top:137.23px;font-size:9.3px;color:#3a3936;font-weight:bold;transform:scaleX(0.9863);">Text</span>
<span class="t" id="t_pr" style="left:6.25px;top:254.53px;font-size:9.3px;color:#3a3936;transform:scaleX(1.0365);">Property</span>
<span class="t" id="t_va" style="left:68.00px;top:254.53px;font-size:9.3px;color:#3a3936;transform:scaleX(0.9890);">Value</span>
<span class="t" id="t_vi" style="left:8.00px;top:423.83px;font-size:9.3px;color:#3a3936;transform:scaleX(0.9500);">View</span>
<span class="t" id="t_da" style="left:37.75px;top:423.83px;font-size:9.3px;color:#3a3936;transform:scaleX(0.9474);">Data</span>
<span class="t" id="t_tb" style="left:200.25px;top:424.43px;font-size:9.3px;color:#3a3936;transform:scaleX(0.9653);">F2-T14-ejemplo-ini : 1*</span>
<span class="t" id="t_st" style="left:721.25px;top:444.53px;font-size:9.3px;color:#4a4945;transform:scaleX(0.9585);">162.53 x 96.91 mm</span>
<span class="t" id="t_tp" style="left:31.75px;top:34.44px;font-size:9.4px;color:#3a3936;transform:scaleX(1.0345);">Top</span>
<span class="t" id="t_px" style="left:103.50px;top:34.53px;font-size:9.3px;color:#3a3936;transform:scaleX(1.0526);">2px</span>
<span class="t" id="t_th" style="left:135.25px;top:34.53px;font-size:9.3px;color:#3a3936;transform:scaleX(0.9565);">3,00</span>
<span class="t" id="t_dr" style="left:296.05px;top:9.83px;font-size:9.3px;color:#474644;transform:scaleX(1.0564);">Draft</span>
<div class="a hl"></div><div class="a rhl2"></div><div class="a rhl"></div><div class="a topedge"></div><div class="a tblue"></div><div class="a ledge"></div><div class="a redge"></div>
</body></html>
